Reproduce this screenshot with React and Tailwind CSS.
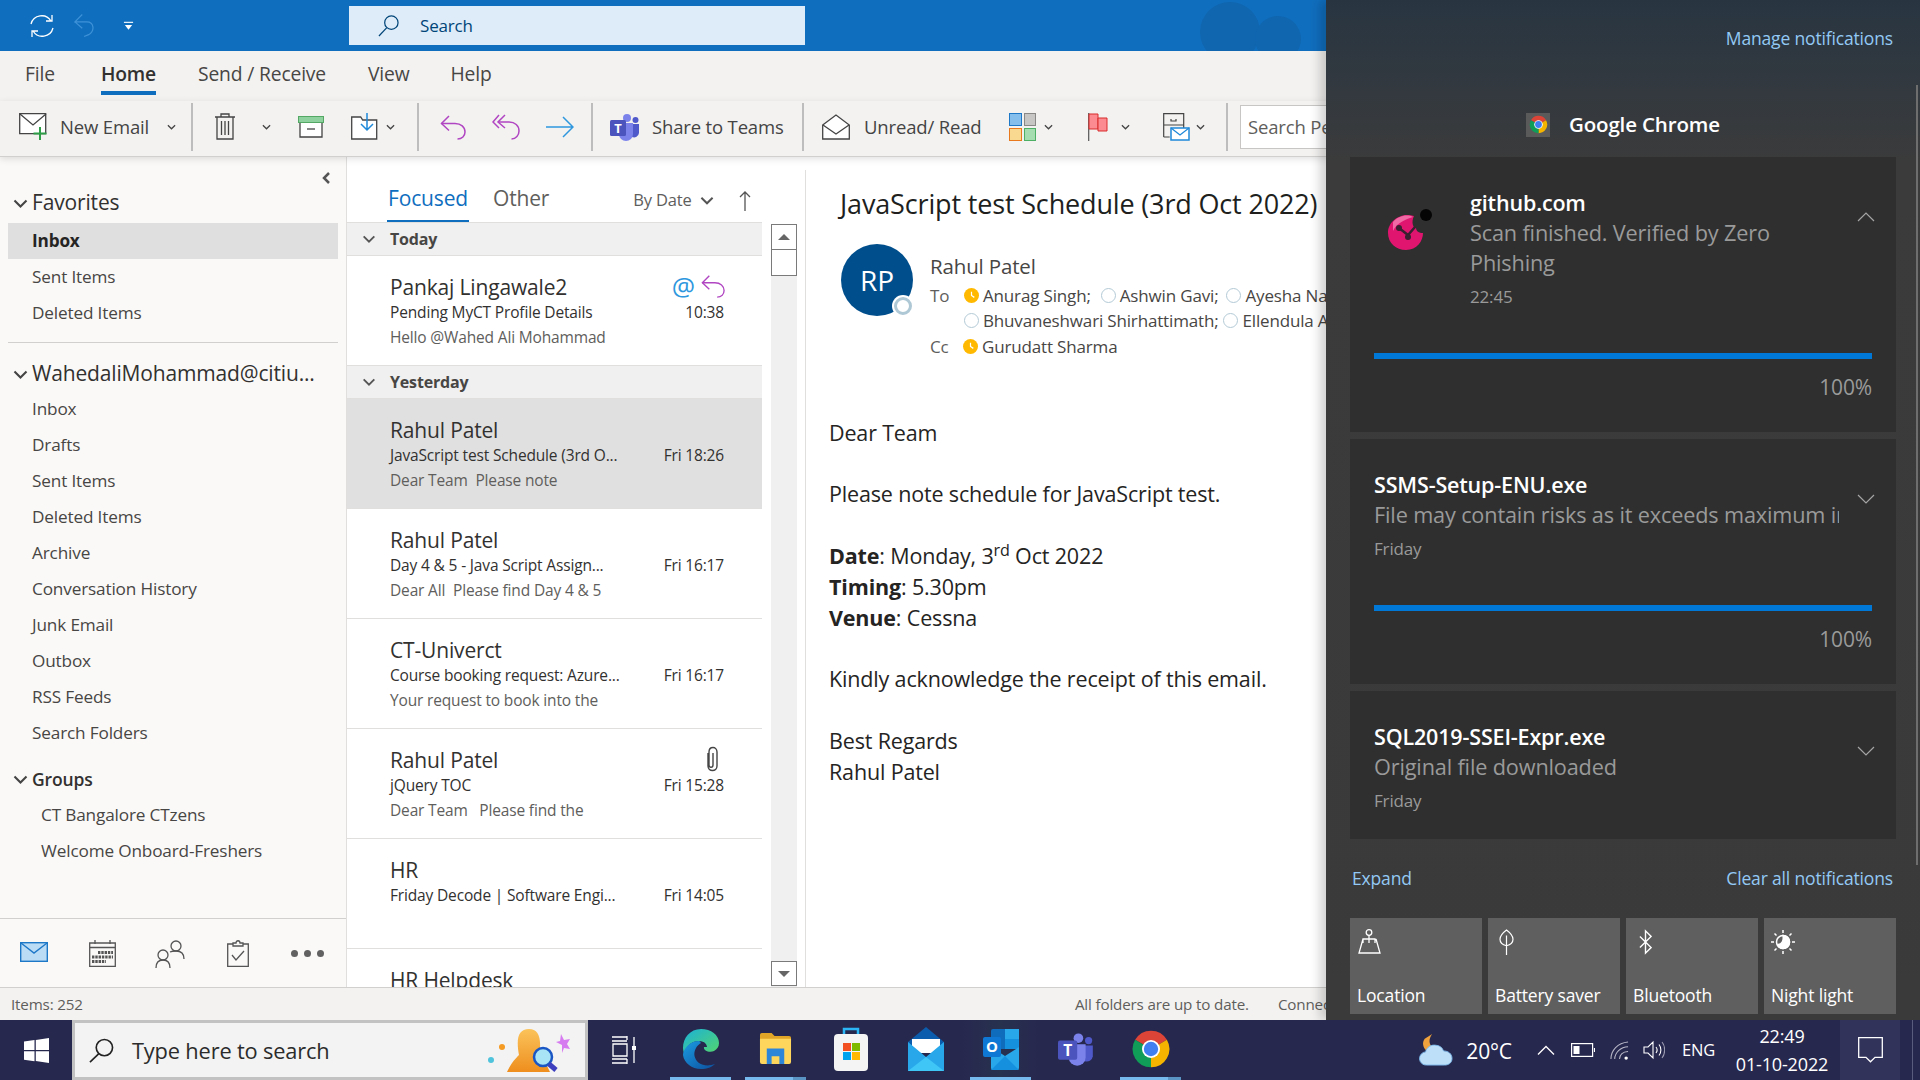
import React from 'react'

const Chev = ({ className = 'w-[9px] h-[6px]', color = '#444' }) => (
  <svg viewBox="0 0 10 6" className={className} fill="none" stroke={color} strokeWidth="1.4"><path d="M1 1l4 4 4-4" /></svg>
)

const Reply = ({ className, color = '#B146C2' }) => (
  <svg viewBox="0 0 26 26" className={className} fill="none" stroke={color} strokeWidth="1.5">
    <path d="M9 2L1.5 9.5 9 16.5" /><path d="M1.5 9.5H15c6 0 10 3.5 10 8.5 0 4-3 7-7.5 7" />
  </svg>
)

const ChromeLogo = ({ className }) => (
  <svg viewBox="0 0 24 24" className={className}>
    <path d="M12 12L2.47 6.5A11 11 0 0 1 21.53 6.5Z" fill="#DB4437" />
    <path d="M12 12L21.53 6.5A11 11 0 0 1 12 23Z" fill="#F4B400" />
    <path d="M12 12L12 23A11 11 0 0 1 2.47 6.5Z" fill="#0F9D58" />
    <circle cx="12" cy="12" r="5.4" fill="#fff" />
    <circle cx="12" cy="12" r="4.3" fill="#3F7FEF" />
  </svg>
)

const TeamsLogo = ({ className }) => (
  <svg viewBox="0 0 30 28" className={className}>
    <circle cx="17" cy="5" r="4" fill="#7B83EB" />
    <circle cx="25.5" cy="7" r="3" fill="#5059C9" />
    <path d="M20 11h9v9a5 5 0 0 1-7 4z" fill="#5059C9" />
    <path d="M9 10h14v11a7 7 0 0 1-14 0z" fill="#7B83EB" />
    <rect x="0" y="7" width="16" height="16" rx="1.5" fill="#4B53BC" />
    <text x="8" y="20" textAnchor="middle" fontSize="13" fontWeight="700" fill="#fff" fontFamily="Open Sans, sans-serif">T</text>
  </svg>
)

const Ribbon = () => (
  <div className="h-[56px] shrink-0 bg-[#F3F2F1] border-b border-[#D2D0CE] flex items-center pb-[4px] relative z-10 shadow-[0_2px_7px_rgba(0,0,0,0.12)] text-[#444] text-[18.500px] whitespace-nowrap">
    <svg viewBox="0 0 29 27" className="w-[29px] h-[27px] ml-[19px]" fill="none">
      <path d="M.7.7h26v20H.7z" fill="#fff" stroke="#444" strokeWidth="1.3" /><path d="M1 1l13 11L27 1" stroke="#444" strokeWidth="1.3" />
      <path d="M21 14v13M14.5 20.5h13" stroke="#2E9E48" strokeWidth="2" />
    </svg>
    <span className="ml-[12px] w-[90px]">New Email</span>
    <Chev className="w-[9px] h-[6px] ml-[17px]" />
    <div className="w-[2px] h-[48px] shrink-0 bg-[#BDBDBD] ml-[15px]" />
    <svg viewBox="0 0 22 27" className="w-[22px] h-[27px] ml-[21px]" fill="none" stroke="#444" strokeWidth="1.3">
      <path d="M1 4h20M7 4V1h8v3M3 4v22h16V4M7.500 8v14M11 8v14M14.500 8v14" />
    </svg>
    <Chev className="w-[9px] h-[6px] ml-[26px]" />
    <svg viewBox="0 0 26 22" className="w-[26px] h-[22px] ml-[27px]" fill="none">
      <rect x=".5" y=".5" width="25" height="6" fill="#8FD19E" stroke="#53A963" />
      <path d="M2 7v14h22V7" fill="#fff" stroke="#444" strokeWidth="1.3" /><path d="M9 13h8" stroke="#444" strokeWidth="1.3" />
    </svg>
    <svg viewBox="0 0 27 27" className="w-[27px] h-[27px] ml-[27px]" fill="none">
      <path d="M.7 4h9l2 3h14v19H.7z" fill="#fff" stroke="#444" strokeWidth="1.3" />
      <path d="M16 0v17M10 11l6 6 6-6" stroke="#1E88D9" strokeWidth="1.5" />
    </svg>
    <Chev className="w-[9px] h-[6px] ml-[8px]" />
    <div className="w-[2px] h-[48px] shrink-0 bg-[#BDBDBD] ml-[22px]" />
    <Reply className="w-[26px] h-[26px] ml-[21px]" />
    <svg viewBox="0 0 28 26" className="w-[28px] h-[26px] ml-[26px]" fill="none" stroke="#B146C2" strokeWidth="1.5">
      <path d="M7 1L1 8l6 6M13 1L6 8l7 6" /><path d="M6 8h11c6 0 10 3.500 10 9 0 4-3 8-7.500 8" />
    </svg>
    <svg viewBox="0 0 28 24" className="w-[28px] h-[24px] ml-[26px]" fill="none" stroke="#2E97DE" strokeWidth="1.5"><path d="M0 12h27M17 2l10 10-10 10" /></svg>
    <div className="w-[2px] h-[48px] shrink-0 bg-[#BDBDBD] ml-[17px]" />
    <TeamsLogo className="w-[30px] h-[28px] ml-[17px]" />
    <span className="ml-[12px] w-[133px]">Share to Teams</span>
    <div className="w-[2px] h-[48px] shrink-0 bg-[#BDBDBD] ml-[17px]" />
    <svg viewBox="0 0 28 26" className="w-[28px] h-[26px] ml-[18px]" fill="none" stroke="#444" strokeWidth="1.3">
      <path d="M.7 11L14 1l13.300 10v14H.700z" fill="#fff" /><path d="M1 11l13 9 13-9" />
    </svg>
    <span className="ml-[14px] w-[119px]">Unread/ Read</span>
    <div className="ml-[26px] w-[27px] h-[28px] grid grid-cols-2 gap-[2px]">
      <div className="bg-[#83BEEC] border-[1.5px] border-[#1E78C8]" />
      <div className="bg-[#C8C6C4] border-[1.5px] border-[#8A8886]" />
      <div className="bg-[#F9D98F] border-[1.5px] border-[#E8791D]" />
      <div className="bg-[#A6DDB0] border-[1.5px] border-[#4CAF64]" />
    </div>
    <Chev className="w-[9px] h-[6px] ml-[8px]" />
    <svg viewBox="0 0 20 28" className="w-[20px] h-[28px] ml-[35px]" fill="none">
      <path d="M.7 0v28" stroke="#555" strokeWidth="1.2" />
      <path d="M1 1h9v15H1z" fill="#FB8A91" stroke="#D92C2C" />
      <path d="M10 5h9v13h-9z" fill="#FB8A91" stroke="#D92C2C" />
    </svg>
    <Chev className="w-[9px] h-[6px] ml-[13px]" />
    <svg viewBox="0 0 27 28" className="w-[27px] h-[28px] ml-[33px]" fill="none">
      <path d="M.700 24V.700h20V16M.700 12h20M8 6v2h5V6M.700 24h6" stroke="#444" strokeWidth="1.200" />
      <rect x="8" y="15" width="18" height="12" fill="#fff" stroke="#1E88D9" strokeWidth="1.500" /><path d="M8 15l9 7 9-7" stroke="#1E88D9" strokeWidth="1.300" />
    </svg>
    <Chev className="w-[9px] h-[6px] ml-[6px]" />
    <div className="w-[2px] h-[48px] shrink-0 bg-[#BDBDBD] ml-[21px]" />
    <div className="ml-[12px] w-[87px] h-[44px] bg-white border border-[#C8C6C4] pl-[7px] flex items-center text-[#605E5C] overflow-hidden">Search People</div>
  </div>
)

const Folder = ({ children, active, indent = 'pl-[32px]' }) => (
  <div className={`h-[36px] flex items-center text-[17.200px] ${indent} ${active ? 'mx-[8px] !pl-[24px] bg-[#DFDFDF] font-bold text-[#252423]' : 'text-[#484644]'}`}>{children}</div>
)

const FolderHead = ({ children, size = 'text-[21px] text-[#323130]' }) => (
  <div className={`h-[36px] flex items-center pl-[13px] ${size}`}>
    <Chev className="w-[15px] h-[9px] mr-[4px]" color="#444" />
    <span className="whitespace-nowrap">{children}</span>
  </div>
)

const Sidebar = () => (
  <div className="w-[346px] shrink-0 bg-[#FAF9F8] flex flex-col">
    <div className="h-[28px] flex items-end justify-end pr-[15px] pb-[1px]">
      <svg viewBox="0 0 10 12" className="w-[10px] h-[12px]" fill="none" stroke="#555" strokeWidth="2.500"><path d="M8 1L3 6l5 5" /></svg>
    </div>
    <FolderHead>Favorites</FolderHead>
    <div className="mt-[1.500px]">
      <Folder active>Inbox</Folder>
      <Folder>Sent Items</Folder>
      <Folder>Deleted Items</Folder>
    </div>
    <div className="mx-[8px] mt-[11.500px] h-px bg-[#D2D0CE]" />
    <div className="mt-[13px]"><FolderHead>WahedaliMohammad@citiu...</FolderHead></div>
    <div className="-mt-px">
      {['Inbox', 'Drafts', 'Sent Items', 'Deleted Items', 'Archive', 'Conversation History', 'Junk Email', 'Outbox', 'RSS Feeds', 'Search Folders'].map(f => <Folder key={f}>{f}</Folder>)}
    </div>
    <div className="mt-[10px]"><FolderHead size="text-[17.500px] font-semibold text-[#323130]">Groups</FolderHead></div>
    <Folder indent="pl-[41px]">CT Bangalore CTzens</Folder>
    <Folder indent="pl-[41px]">Welcome Onboard-Freshers</Folder>
    <div className="flex-1" />
    <div className="h-[69px] border-t border-[#D2D0CE] relative">
      <svg viewBox="0 0 28 20" className="absolute left-[20px] top-[23px] w-[28px] h-[20px]"><rect x=".7" y=".7" width="26.600" height="18.600" fill="#BBDCF5" stroke="#1E78C8" strokeWidth="1.400" /><path d="M1 1l13 10L27 1" fill="none" stroke="#1E78C8" strokeWidth="1.400" /></svg>
      <svg viewBox="0 0 27 27" className="absolute left-[89px] top-[21px] w-[27px] h-[27px]" fill="none" stroke="#555" strokeWidth="1.300">
        <path d="M.7 3h25.600v23.300H.7zM.7 7.500h25.600M6 0v4M21 0v4" />
        <path d="M9 12.500h15M3 17h21M3 21.500h14" strokeWidth="3" strokeDasharray="2.400 .9" />
      </svg>
      <svg viewBox="0 0 30 28" className="absolute left-[155px] top-[21px] w-[30px] h-[28px]" fill="none" stroke="#555" strokeWidth="1.300">
        <circle cx="8" cy="15" r="5" /><path d="M1 28c0-6 3-8 7-8s7 2 7 8" /><circle cx="21" cy="6" r="5" /><path d="M15 12c2-1 4-1 6-1 4 0 8 2 8 8" />
      </svg>
      <svg viewBox="0 0 22 27" className="absolute left-[227px] top-[21px] w-[22px] h-[27px]" fill="none" stroke="#555" strokeWidth="1.300">
        <path d="M6 4H.7v22.300h20.600V4H16" /><path d="M6 6V3h3c0-3 4-3 4 0h3v3z" /><path d="M5 15l4 5 8-9" />
      </svg>
      <div className="absolute left-[291px] top-[31px] flex gap-[6px]">
        <div className="w-[7px] h-[7px] rounded-full bg-[#616161]" /><div className="w-[7px] h-[7px] rounded-full bg-[#616161]" /><div className="w-[7px] h-[7px] rounded-full bg-[#616161]" />
      </div>
    </div>
  </div>
)

const mails = [
  { name: 'Rahul Patel', subject: 'JavaScript test Schedule (3rd O...', preview: 'Dear Team  Please note', time: 'Fri 18:26', active: true },
  { name: 'Rahul Patel', subject: 'Day 4 & 5 - Java Script Assign...', preview: 'Dear All  Please find Day 4 & 5', time: 'Fri 16:17' },
  { name: 'CT-Univerct', subject: 'Course booking request: Azure...', preview: 'Your request to book into the', time: 'Fri 16:17' },
  { name: 'Rahul Patel', subject: 'jQuery TOC', preview: 'Dear Team   Please find the', time: 'Fri 15:28', clip: true },
  { name: 'HR', subject: 'Friday Decode | Software Engi...', preview: '', time: 'Fri 14:05' },
  { name: 'HR Helpdesk', subject: '', preview: '', time: '' },
]

const GroupHead = ({ children }) => (
  <div className="h-[33px] shrink-0 bg-[#F0F0F0] border-b border-[#E1DFDD] flex items-center pl-[15px] text-[16px] font-bold text-[#484644]">
    <Chev className="w-[14px] h-[8px] mr-[14px]" color="#555" />
    {children}
  </div>
)

const MailRow = ({ m, first }) => (
  <div className={`h-[110px] shrink-0 relative pl-[43px] pt-[15px] border-b border-[#E1DFDD] whitespace-nowrap ${m.active ? 'bg-[#E0E0E0]' : ''}`}>
    <div className="text-[21px] leading-[32px] text-[#323130]">{m.name}</div>
    <div className="text-[15.500px] leading-[25px] -mt-[3px] text-[#323130]">{m.subject}</div>
    <div className="text-[15.500px] leading-[24px] text-[#605E5C] whitespace-pre">{m.preview}</div>
    <div className="absolute right-[38px] top-[44px] text-[15.500px] leading-[25px] text-[#323130]">{m.time}</div>
    {first && (
      <div className="absolute right-[37px] top-[17px] flex items-center gap-[6px]">
        <span className="text-[26px] leading-[26px] text-[#2E97DE]">@</span>
        <Reply className="w-[24px] h-[24px]" />
      </div>
    )}
    {m.clip && (
      <svg viewBox="0 0 16 26" className="absolute right-[42px] top-[17px] w-[16px] h-[26px]" fill="none" stroke="#444" strokeWidth="1.400">
        <path d="M4 7v13c0 6 9 6 9 0V6c0-6-8-6-8 0v13c0 3 4 3 4 0V7" />
      </svg>
    )}
  </div>
)

const MailList = () => (
  <div className="w-[458px] shrink-0 bg-white flex flex-col">
    <div className="h-[66px] shrink-0 flex relative">
      <div className="ml-[40px] w-[82px] border-b-[3px] border-[#106EBE] flex items-center justify-center text-[21px] text-[#106EBE] pt-[20px]">Focused</div>
      <div className="ml-[24px] flex items-center text-[21px] text-[#605E5C] h-[64px] pt-[20px]">Other</div>
      <div className="ml-[84px] flex items-center text-[16.500px] text-[#605E5C] h-[66px] pt-[20px]">By Date<Chev className="w-[14px] h-[9px] ml-[8px]" color="#555" /></div>
      <svg viewBox="0 0 12 20" className="ml-[25px] mt-[34px] w-[12px] h-[20px]" fill="none" stroke="#555" strokeWidth="1.300"><path d="M6 20V1M1 6l5-5 5 5" /></svg>
      <div className="absolute left-0 right-[43px] bottom-0 h-px bg-[#E1DFDD] -z-0" />
    </div>
    <div className="flex-1 flex overflow-hidden">
      <div className="w-[415px] shrink-0 flex flex-col overflow-hidden">
        <GroupHead>Today</GroupHead>
        <MailRow first m={{ name: 'Pankaj Lingawale2', subject: 'Pending MyCT Profile Details', preview: 'Hello @Wahed Ali Mohammad', time: '10:38' }} />
        <GroupHead>Yesterday</GroupHead>
        {mails.map((m, i) => <MailRow key={i} m={m} />)}
      </div>
      <div className="ml-[9px] mt-[1px] w-[26px] bg-[#F0F0F0] flex flex-col">
        <div className="h-[26px] bg-white border border-[#7A7A7A] flex items-center justify-center"><div className="w-0 h-0 border-l-[6px] border-r-[6px] border-b-[6px] border-l-transparent border-r-transparent border-b-[#666]" /></div>
        <div className="h-[26px] bg-white border border-t-0 border-[#7A7A7A]" />
        <div className="flex-1" />
        <div className="h-[25px] mb-[1px] bg-white border border-[#7A7A7A] flex items-center justify-center"><div className="w-0 h-0 border-l-[6px] border-r-[6px] border-t-[6px] border-l-transparent border-r-transparent border-t-[#666]" /></div>
      </div>
    </div>
  </div>
)

const Presence = ({ busy }) => busy ? (
  <svg viewBox="0 0 16 16" className="w-[15px] h-[15px] shrink-0"><circle cx="8" cy="8" r="8" fill="#FFB900" /><path d="M8 4v4l3 2" fill="none" stroke="#fff" strokeWidth="1.300" /></svg>
) : (
  <div className="w-[15px] h-[15px] shrink-0 rounded-full border border-[#B3CAD6]" />
)

const Person = ({ name, busy, gap = 'mr-[5px]' }) => (
  <span className={`inline-flex items-center gap-[4px] ${gap}`}><Presence busy={busy} />{name}</span>
)

const Reading = () => (
  <div className="flex-1 bg-white overflow-hidden text-[#323130]">
    <div className="ml-[34px] mt-[27px] h-[40px] flex items-center text-[27px] text-[#201F1E] whitespace-nowrap">JavaScript test Schedule (3rd Oct 2022)</div>
    <div className="ml-[35px] mt-[20px] flex whitespace-nowrap">
      <div className="w-[72px] h-[72px] rounded-full bg-[#004E8C] text-white text-[28px] flex items-center justify-center relative">
        RP
        <div className="absolute right-[-1px] bottom-[-1px] w-[22px] h-[22px] rounded-full bg-white flex items-center justify-center"><div className="w-[18px] h-[18px] rounded-full border-[3px] border-[#AFC8D5]" /></div>
      </div>
      <div className="ml-[17px] text-[17px] text-[#484644]">
        <div className="text-[20.500px] leading-[28px] mt-[8px] text-[#484644]">Rahul Patel</div>
        <div className="h-[25px] mt-[3px] flex items-center"><span className="w-[34px] text-[#605E5C]">To</span><Person busy name="Anurag Singh;" gap="mr-[10px]" /><Person name="Ashwin Gavi;" gap="mr-[8px]" /><Person name="Ayesha Naaz;" /></div>
        <div className="h-[25px] flex items-center pl-[34px]"><Person name="Bhuvaneshwari Shirhattimath;" /><Person name="Ellendula Anil" /></div>
        <div className="h-[25px] mt-[1px] flex items-center"><span className="w-[33px] text-[#605E5C]">Cc</span><Person busy name="Gurudatt Sharma" /></div>
      </div>
    </div>
    <div className="ml-[23px] mt-[58px] text-[21.500px] leading-[31px] text-[#252423] whitespace-nowrap">
      <p>Dear Team</p>
      <p className="mt-[30px]">Please note schedule for JavaScript test.</p>
      <p className="mt-[31px]"><b>Date</b>: Monday, 3<sup>rd</sup> Oct 2022</p>
      <p><b>Timing</b>: 5.30pm</p>
      <p><b>Venue</b>: Cessna</p>
      <p className="mt-[30px]">Kindly acknowledge the receipt of this email.</p>
      <p className="mt-[31px]">Best Regards</p>
      <p>Rahul Patel</p>
    </div>
  </div>
)

const Toast = ({ title, lines, time, bar, open, logo, className }) => (
  <div className={`bg-[#2F2F2F] relative pt-[31px] ${logo ? 'pl-[120px]' : 'pl-[24px]'} ${className}`}>
    {logo}
    <div className="text-[21.500px] leading-[30px] text-white font-semibold">{title}</div>
    {lines.map(l => <div key={l} className={`text-[21.700px] leading-[30px] text-[#9A9A9A] whitespace-nowrap overflow-hidden ${logo ? 'w-[370px]' : 'w-[465px]'}`}>{l}</div>)}
    <div className="text-[17px] leading-[24px] text-[#9A9A9A] mt-[7px]">{time}</div>
    <svg viewBox="0 0 18 10" className="absolute right-[21px] top-[55px] w-[18px] h-[10px]" fill="none" stroke="#A5A5A5" strokeWidth="1.200"><path d={open ? 'M1 9l8-8 8 8' : 'M1 1l8 8 8-8'} /></svg>
    {bar && (
      <div className={`${logo ? '-ml-[96px]' : ''} mr-[24px] mt-[44px]`}>
        <div className="h-[6px] bg-[#0078D7]" />
        <div className="text-right text-[21px] leading-[30px] text-[#9A9A9A] mt-[13px]">100%</div>
      </div>
    )}
  </div>
)

const ZeroLogo = () => (
  <svg viewBox="0 0 44 42" className="absolute left-[38px] top-[51px] w-[44px] h-[42px]">
    <circle cx="38" cy="7" r="6" fill="#050505" />
    <path d="M26 8C13 4 0 13 0 25c0 10 8 17 18 17 11 0 17-9 17-17-4 0-7-2-7-5-3 0-5-6-2-12z" fill="#E0156F" />
    <path d="M5 14c5-6 14-8 20-5-6 2-16 5-20 14z" fill="#F06AA6" />
    <path d="M11 20l9 7 7-8M20 27v3" fill="none" stroke="#3A2030" strokeWidth="2.500" />
    <circle cx="11" cy="20" r="3" fill="#3A2030" /><circle cx="20" cy="29" r="3" fill="#3A2030" />
  </svg>
)

const Tile = ({ label, icon }) => (
  <div className="bg-[#5F5F5F] h-[96px] flex flex-col justify-between pl-[7px] pt-[11px] pb-[6px] text-[17.500px] text-white">
    <div className="h-[26px]">{icon}</div>
    <span className="leading-[26px]">{label}</span>
  </div>
)

const ActionCenter = () => (
  <div className="absolute right-0 top-0 w-[594px] h-[1020px] bg-[linear-gradient(180deg,#283541_0%,#33393f_9%,#3B3B3B_16%,#3A3A3A_100%)] shadow-[-6px_0_10px_rgba(0,0,0,0.18)] pl-[24px] pr-[24px] z-20">
    <div className="absolute right-[2px] top-[85px] h-[780px] w-[2px] bg-[#6E6E6E]" />
    <div className="h-[78px] flex items-center justify-end pr-[3px] text-[17.500px] text-[#93C9F4]"><span className="-mt-[1px]">Manage notifications</span></div>
    <div className="h-[79px] flex items-center pt-[14px] pl-[176px] text-[20.500px] font-semibold text-white">
      <div className="w-[24px] h-[24px] bg-[#5A5A5A] flex items-center justify-center mr-[19px]"><ChromeLogo className="w-[19px] h-[19px]" /></div>
      Google Chrome
    </div>
    <Toast title="github.com" lines={['Scan finished. Verified by Zero', 'Phishing']} time="22:45" bar open logo={<ZeroLogo />} className="h-[275px]" />
    <Toast title="SSMS-Setup-ENU.exe" lines={['File may contain risks as it exceeds maximum ir']} time="Friday" bar className="h-[245px] mt-[7px]" />
    <Toast title="SQL2019-SSEI-Expr.exe" lines={['Original file downloaded']} time="Friday" className="h-[148px] mt-[7px]" />
    <div className="h-[79px] flex items-start pt-[26px] justify-between text-[17.500px] text-[#93C9F4] pl-[2px] pr-[3px]">
      <span>Expand</span><span>Clear all notifications</span>
    </div>
    <div className="grid grid-cols-4 gap-[6px]">
      <Tile label="Location" icon={
        <svg viewBox="0 0 24 26" className="w-[24px] h-[26px] ml-[1px]" fill="none" stroke="#fff" strokeWidth="1.300"><circle cx="11" cy="3.500" r="2.800" /><path d="M11 6v8M5 14V10h12v4M5 10L1 24h21l-4-14" /></svg>
      } />
      <Tile label="Battery saver" icon={
        <svg viewBox="0 0 16 28" className="w-[15px] h-[26px] ml-[4px]" fill="none" stroke="#fff" strokeWidth="1.300"><path d="M8 1c-4 3-7 6-7 10s3 6 7 7c4-1 7-3 7-7S12 4 8 1zM8 7v21" /></svg>
      } />
      <Tile label="Bluetooth" icon={
        <svg viewBox="0 0 14 26" className="w-[13px] h-[26px] ml-[6px]" fill="none" stroke="#fff" strokeWidth="1.500"><path d="M1 7l12 12-6 6V1l6 6L1 19" /></svg>
      } />
      <Tile label="Night light" icon={
        <svg viewBox="0 0 26 26" className="w-[26px] h-[26px] -ml-[1px]" fill="none" stroke="#fff" strokeWidth="1.500"><circle cx="13" cy="13" r="6.500" /><path d="M13 6.500a6.500 6.500 0 0 1 0 13c-3 0-5-3-5-4 4 0 6-4 5-9z" fill="#fff" /><path d="M13 1v3M13 22v3M1 13h3M22 13h3M4.500 4.500l2 2M19.500 19.500l2 2M4.500 21.500l2-2M19.500 6.500l2-2" /></svg>
      } />
    </div>
  </div>
)

const TaskIcon = ({ children, under, split, bg }) => (
  <div className={`w-[75px] h-full flex flex-col items-center ${bg || ''}`}>
    <div className="flex-1 flex items-center justify-center">{children}</div>
    <div className={`h-[3px] w-[61px] flex ${under ? 'bg-[#76B9ED]' : ''}`}>{split && <div className="ml-auto w-[13px] bg-[#5A94C4]" />}</div>
  </div>
)

const Taskbar = () => (
  <div className="h-[60px] shrink-0 bg-[#27284E] flex items-stretch relative z-30 text-white whitespace-nowrap">
    <div className="w-[72px] flex items-center justify-center">
      <svg viewBox="0 0 25 25" className="w-[25px] h-[25px]" fill="#fff"><path d="M0 3.500l10.500-1.400v9.900H0zM11.800 1.900L25 0v12H11.800zM0 13.300h10.500v9.900L0 21.800zM11.800 13.300H25V25l-13.200-1.900z" /></svg>
    </div>
    <div className="w-[516px] bg-[#F3F3F3] border-[3px] border-[#C2C2C2] flex items-center relative text-[#2B2B2B] text-[21.800px]">
      <svg viewBox="0 0 26 26" className="ml-[14px] w-[25px] h-[25px]" fill="none" stroke="#222" strokeWidth="1.700"><circle cx="16" cy="10" r="8.500" /><path d="M10 16.500L1 25" /></svg>
      <span className="ml-[18px] pt-[2px]">Type here to search</span>
      <svg viewBox="0 0 90 50" className="absolute left-[410px] top-[2px] w-[90px] h-[50px]">
        <defs><linearGradient id="pers" x1="0" y1="0" x2="0" y2="1"><stop offset="0" stopColor="#FBC35A" /><stop offset="1" stopColor="#EE8E1E" /></linearGradient></defs>
        <circle cx="17" cy="22" r="3" fill="#F59A23" /><circle cx="6" cy="35" r="3" fill="#4FC3DC" />
        <path d="M77 20l-6-3 4-1 1-7 3 6 6-1-3 5 3 5-6-1-2 5z" fill="#D67BF0" />
        <path d="M22 47C26 38 31 33 34 30 31 14 33 4 44 4 54 4 57 14 54 30 58 34 62 40 65 47Z" fill="url(#pers)" />
        <circle cx="58" cy="32" r="9" fill="#A8E4F5" stroke="#1A56C4" strokeWidth="2.500" /><path d="M64 39l7 6" stroke="#3D3FBE" strokeWidth="5" />
      </svg>
    </div>
    <div className="w-[75px] flex items-center justify-center">
      <svg viewBox="0 0 24 28" className="w-[24px] h-[28px] mr-[3px]" fill="none" stroke="#fff" strokeWidth="1.300"><path d="M0 1h15M15 0v4M0 5h15M1 8h14v12H1zM0 23h15M15 23v5M0 27h15" /><path d="M22 1v26" /><rect x="20" y="10" width="4" height="4" fill="#fff" stroke="none" /></svg>
    </div>
    <TaskIcon under>
      <svg viewBox="0 0 36 40" className="w-[36px] h-[44px]">
        <defs>
          <linearGradient id="edgeA" x1="0" y1="0" x2="1" y2="1"><stop offset="0" stopColor="#1BB1D8" /><stop offset="1" stopColor="#55D66B" /></linearGradient>
          <linearGradient id="edgeB" x1="0" y1="0" x2="1" y2="1"><stop offset="0" stopColor="#1B9DE2" /><stop offset="1" stopColor="#0C4F9E" /></linearGradient>
        </defs>
        <path d="M18 0C7 0 0 9 0 19c0 3 1 5 2 7 0-8 6-14 14-14 6 0 8 4 8 6h-3c-1 4 6 6 10 4 3-2 5-4 5-8C36 6 28 0 18 0z" fill="url(#edgeA)" />
        <path d="M16 12C7 12 0 20 0 26c1 8 9 14 18 14 6 0 11-2 14-5-5 2-12 2-16-1-5-4-6-10-3-15 1-2 3-4 5-5-1-1-1-2-2-2z" fill="url(#edgeB)" />
      </svg>
    </TaskIcon>
    <TaskIcon under split>
      <svg viewBox="0 0 34 34" className="w-[33px] h-[33px]">
        <path d="M1 3a2 2 0 0 1 2-2h10l3 3h15a2 2 0 0 1 2 2v4H1z" fill="#E0A526" />
        <path d="M1 7h32v24a2 2 0 0 1-2 2H3a2 2 0 0 1-2-2z" fill="#FFD65C" />
        <path d="M8 17h18v16h-5v-8h-8v8H8z" fill="#2E86D9" />
      </svg>
    </TaskIcon>
    <TaskIcon>
      <svg viewBox="0 0 36 46" className="w-[36px] h-[46px]">
        <path d="M11 10V3h14v7" fill="none" stroke="#2DB6F5" strokeWidth="2.500" />
        <rect x="1" y="8" width="34" height="37" rx="4" fill="#F4F4F4" />
        <rect x="10" y="17" width="8" height="8" fill="#F25022" /><rect x="19" y="17" width="8" height="8" fill="#7FBA00" />
        <rect x="10" y="26" width="8" height="8" fill="#00A4EF" /><rect x="19" y="26" width="8" height="8" fill="#FFB900" />
      </svg>
    </TaskIcon>
    <TaskIcon>
      <svg viewBox="0 0 36 44" className="w-[36px] h-[44px]">
        <path d="M0 15L18 0l18 15v6H0z" fill="#0B5CAD" />
        <path d="M4 12h28v14H4z" fill="#fff" />
        <path d="M0 15l18 15 18-15v29H0z" fill="#28A8EA" />
        <path d="M0 44l18-14 18 14z" fill="#50D9FF" opacity=".6" />
      </svg>
    </TaskIcon>
    <TaskIcon under bg="bg-[linear-gradient(90deg,#27284E,#27324F_50%,#27284E)]">
      <svg viewBox="0 0 36 42" className="w-[36px] h-[42px]">
        <rect x="8" y="1" width="28" height="20" rx="2" fill="#0F6CBD" />
        <rect x="22" y="1" width="14" height="10" fill="#28A8EA" /><rect x="22" y="11" width="14" height="10" fill="#1490DF" />
        <path d="M8 19l14 9 14-9v21a2 2 0 0 1-2 2H10a2 2 0 0 1-2-2z" fill="#28A8EA" />
        <path d="M8 42l14-14 14 14z" fill="#1490DF" />
        <rect x="0" y="9" width="18" height="20" rx="2" fill="#0F78D4" />
        <text x="9" y="24" textAnchor="middle" fontSize="15" fontWeight="700" fill="#fff" fontFamily="Open Sans, sans-serif">O</text>
      </svg>
    </TaskIcon>
    <TaskIcon><TeamsLogo className="w-[36px] h-[42px]" /></TaskIcon>
    <TaskIcon under split><ChromeLogo className="w-[40px] h-[40px]" /></TaskIcon>
    <div className="flex-1" />
    <div className="flex items-center">
      <svg viewBox="0 0 36 34" className="w-[36px] h-[32px]">
        <path d="M14 0c-4 5-4 11 1 15 3 2 6 3 9 2-4 5-11 5-16 1C4 14 3 9 6 5z" fill="#F0A33C" />
        <path d="M8 33a7 7 0 0 1-1-14c1-5 6-8 11-7 4 0 7 3 8 6 5 0 9 3 9 8s-4 7-8 7z" fill="#BEDFF8" stroke="#7BB7EA" />
      </svg>
      <span className="ml-[12px] text-[21px] pt-[3px]">20°C</span>
      <svg viewBox="0 0 18 10" className="ml-[25.500px] w-[18px] h-[10px]" fill="none" stroke="#fff" strokeWidth="1.300"><path d="M1 9.500l8-8 8 8" /></svg>
      <svg viewBox="0 0 24 14" className="ml-[16px] w-[24px] h-[14px]" fill="none" stroke="#fff" strokeWidth="1.200"><rect x=".6" y=".6" width="21" height="12.800" /><rect x="2.500" y="3" width="6" height="8" fill="#fff" stroke="none" /><path d="M23.500 5v4" /></svg>
      <svg viewBox="0 0 20 20" className="ml-[14.500px] w-[19px] h-[19px]" fill="none" stroke="#B8B8C8" strokeWidth="1.100"><path d="M1 19C1 10 8 2 19 1M5 19c0-6 6-13 14-13M10 19c0-4 3-8 9-8" /><circle cx="17" cy="18" r="1.800" fill="#fff" stroke="none" /></svg>
      <svg viewBox="0 0 22 20" className="ml-[14px] w-[22px] h-[20px]" fill="none" stroke="#fff" strokeWidth="1.100"><path d="M1 7h4l5-5v16l-5-5H1zM13 7c1.500 2 1.500 4 0 6M16 4.500c2.500 3 2.500 8 0 11" /><path d="M19 2c3.500 4 3.500 12 0 16" stroke="#9A9AB0" /></svg>
      <span className="ml-[17px] text-[16.500px]">ENG</span>
      <div className="ml-[20px] w-[94px] flex flex-col items-center text-[18px] leading-[28px]"><span>22:49</span><span>01-10-2022</span></div>
      <div className="ml-[11px] w-[60px] h-[60px] bg-[#31335B] flex items-center justify-center">
        <svg viewBox="0 0 25 26" className="w-[25px] h-[26px]" fill="none" stroke="#fff" strokeWidth="1.300"><path d="M.7.7h23.600v19.600H17l-4.500 4.500L8 20.300H.7z" /></svg>
      </div>
      <div className="ml-[12px] w-px h-[60px] bg-[#5A5C7E] mr-[7px]" />
    </div>
  </div>
)

export default function App() {
  return (
    <div className="w-[1920px] h-[1080px] relative overflow-hidden flex flex-col font-['Open_Sans',sans-serif] tracking-[-0.01em]">
      <div className="h-[1020px] flex flex-col overflow-hidden">
        <div className="h-[51px] shrink-0 bg-[#106EBE] flex items-center relative">
          <svg viewBox="0 0 26 24" className="ml-[29px] w-[26px] h-[24px]" fill="none" stroke="#fff" strokeWidth="1.300">
            <path d="M2 10a11 11 0 0 1 20-3M23 1v6h-6M24 14a11 11 0 0 1-20 3M3 23v-6h6" />
          </svg>
          <svg viewBox="0 0 24 26" className="ml-[19px] w-[22px] h-[25px]" fill="none" stroke="#3E92D8" strokeWidth="1.300">
            <path d="M9 1L1 9h13c8 0 9 10 2 14l-5 2M1 9l8 7" />
          </svg>
          <svg viewBox="0 0 12 10" className="ml-[27px] w-[11px] h-[10px]" fill="none" stroke="#fff" strokeWidth="1.200"><path d="M1 1h10" /><path d="M2 4l4 5 4-5z" fill="#fff" stroke="none" /></svg>
          <div className="ml-[215px] w-[456px] h-[39px] bg-[#DEECF9] flex items-center text-[17px] text-[#004578]">
            <svg viewBox="0 0 22 23" className="ml-[29px] w-[21px] h-[22px]" fill="none" stroke="#004578" strokeWidth="1.300"><circle cx="14" cy="8" r="7" /><path d="M9 13.500L1 22" /></svg>
            <span className="ml-[21px]">Search</span>
          </div>
          <div className="absolute left-[1200px] top-[2px] w-[60px] h-[60px] rounded-full bg-[#1066AF]" />
          <div className="absolute left-[1255px] top-[16px] w-[46px] h-[46px] rounded-full bg-[#1066AF]" />
        </div>
        <div className="h-[50px] shrink-0 bg-[#F3F2F1] flex items-center text-[19.300px] text-[#484644] relative pb-[4px]">
          <span className="ml-[25px]">File</span>
          <div className="ml-[46px] relative font-semibold text-[#323130]">Home<div className="absolute left-0 right-0 -bottom-[7px] h-[4px] bg-[#106EBE]" /></div>
          <span className="ml-[42px]">Send / Receive</span>
          <span className="ml-[42px]">View</span>
          <span className="ml-[41px]">Help</span>
        </div>
        <Ribbon />
        <div className="flex-1 flex overflow-hidden">
          <Sidebar />
          <div className="w-px shrink-0 bg-[#E1DFDD]" />
          <MailList />
          <div className="w-px shrink-0 bg-[#E1DFDD] mt-[13px]" />
          <Reading />
        </div>
        <div className="h-[33px] shrink-0 bg-[#F3F2F1] border-t border-[#D2D0CE] flex items-center text-[15.200px] text-[#605E5C]">
          <span className="ml-[11px]">Items: 252</span>
          <span className="ml-[992px]">All folders are up to date.</span>
          <span className="ml-[29px] w-[50px] overflow-hidden whitespace-nowrap">Connected</span>
        </div>
      </div>
      <ActionCenter />
      <Taskbar />
    </div>
  )
}
